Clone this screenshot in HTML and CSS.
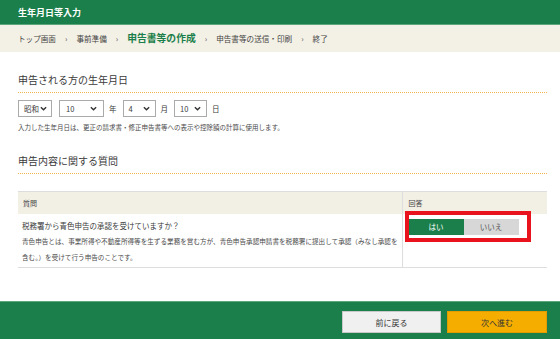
FILE: index.html
```html
<!DOCTYPE html>
<html lang="ja">
<head>
<meta charset="utf-8">
<link rel="stylesheet" href="styles.css">
</head>
<body>
<div class="page">
  <header class="topbar"><h1 class="topbar-title">生年月日等入力</h1></header>
  <nav class="crumbs">
    <span class="crumb">トップ画面</span><span class="sep">›</span>
    <span class="crumb">事前準備</span><span class="sep">›</span>
    <span class="crumb current">申告書等の作成</span><span class="sep">›</span>
    <span class="crumb">申告書等の送信・印刷</span><span class="sep">›</span>
    <span class="crumb">終了</span>
  </nav>
  <main class="content">
    <h2 class="sec-title">申告される方の生年月日</h2>
    <div class="dob">
      <span class="sel sel-era"><span class="sel-val">昭和</span><svg class="chev" viewBox="0 0 8 5"><path d="M1 1l3 3 3-3" fill="none" stroke="#333" stroke-width="1.6"/></svg></span>
      <span class="sel sel-year"><span class="sel-val">10</span><svg class="chev" viewBox="0 0 8 5"><path d="M1 1l3 3 3-3" fill="none" stroke="#333" stroke-width="1.6"/></svg></span>
      <span class="unit">年</span>
      <span class="sel sel-small"><span class="sel-val">4</span><svg class="chev" viewBox="0 0 8 5"><path d="M1 1l3 3 3-3" fill="none" stroke="#333" stroke-width="1.6"/></svg></span>
      <span class="unit">月</span>
      <span class="sel sel-small"><span class="sel-val">10</span><svg class="chev" viewBox="0 0 8 5"><path d="M1 1l3 3 3-3" fill="none" stroke="#333" stroke-width="1.6"/></svg></span>
      <span class="unit">日</span>
    </div>
    <p class="note">入力した生年月日は、更正の請求書・修正申告書等への表示や控除額の計算に使用します。</p>

    <h2 class="sec-title sec-2">申告内容に関する質問</h2>
    <table class="qtable">
      <thead>
        <tr><th class="col-q">質問</th><th class="col-a">回答</th></tr>
      </thead>
      <tbody>
        <tr>
          <td class="col-q">
            <p class="q-main">税務署から青色申告の承認を受けていますか？</p>
            <p class="q-desc">青色申告とは、事業所得や不動産所得等を生ずる業務を営む方が、青色申告承認申請書を税務署に提出して承認（みなし承認を含む。）を受けて行う申告のことです。</p>
          </td>
          <td class="col-a">
            <div class="answer">
              <span class="btn-yes">はい</span><span class="btn-no">いいえ</span>
              <span class="highlight"></span>
            </div>
          </td>
        </tr>
      </tbody>
    </table>
  </main>
  <footer class="footbar">
    <span class="btn-back">前に戻る</span>
    <span class="btn-next">次へ進む</span>
  </footer>
</div>
</body>
</html>
```
FILE: styles.css
```css
* { box-sizing: border-box; }
html, body { margin: 0; padding: 0; }
body {
  font-family: "Noto Sans CJK JP", "Noto Sans", sans-serif;
  color: #3a3a3a;
  background: #fff;
}
.page {
  height: 339px;
  display: flex;
  flex-direction: column;
  overflow: hidden;
}
.topbar {
  height: 25px;
  background: #1b7f4b;
  border-bottom: 1px solid #5ea67c;
  display: flex;
  align-items: center;
  padding-left: 18px;
}
.topbar-title {
  margin: 0;
  font-size: 9px;
  font-weight: bold;
  color: #fff;
  line-height: 1;
}
.crumbs {
  height: 27px;
  background: #f3f0e6;
  display: flex;
  align-items: center;
  padding-left: 18px;
  font-size: 7.6px;
  color: #444;
}
.crumb { line-height: 1; }
.crumb.current {
  font-size: 9.8px;
  font-weight: bold;
  color: #1b7f4b;
}
.sep {
  margin: 0 9px;
  font-size: 8px;
  color: #555;
}
.content {
  margin: 0 13px 0 18px;
}
.sec-title {
  margin: 21px 0 0;
  font-size: 10px;
  font-weight: normal;
  line-height: 14px;
  color: #3a3a3a;
  padding-bottom: 5px;
  border-bottom: 1px dotted #f2b552;
}
.sec-2 { margin-top: 22px; }
.dob {
  margin-top: 7px;
  display: flex;
  align-items: center;
  height: 17px;
  font-size: 7.5px;
  color: #3a3a3a;
}
.sel {
  height: 17px;
  border: 1px solid #aaa;
  background: #fff;
  display: flex;
  align-items: center;
  justify-content: space-between;
  padding: 0 4px 0 5px;
}
.sel-era { width: 34px; margin-right: 7px; }
.sel-year { width: 45px; padding-left: 6px; padding-right: 6px; }
.sel-small { width: 33px; padding-left: 5px; padding-right: 5px; }
.chev { width: 7px; height: 5px; display: block; }
.unit { margin: 0 6px 0 5px; }
.note {
  margin: 5px 0 0;
  font-size: 6.5px;
  line-height: 10px;
  color: #4a4a4a;
}
.qtable {
  margin-top: 17px;
  width: 529px;
  border-collapse: collapse;
  font-size: 7px;
}
.qtable th {
  background: #f2efe4;
  font-weight: normal;
  text-align: left;
  height: 22px;
  padding: 0 5px;
  border-top: 1px solid #ddd;
  color: #444;
}
.qtable td {
  vertical-align: top;
  height: 54px;
  border-bottom: 1px solid #ddd;
  padding: 0;
}
.qtable th.col-a { border-left: 1px solid #ddd; padding-left: 6px; }
.qtable td.col-a { border-left: 1px solid #ddd; }
.col-q { width: 384px; }
td.col-q { padding: 5px 4px 0 4px; }
.q-main {
  margin: 0;
  font-size: 7.5px;
  line-height: 14px;
  color: #3a3a3a;
}
.q-desc {
  margin: 0;
  font-size: 6.6px;
  line-height: 16px;
  color: #4a4a4a;
}
.answer {
  position: relative;
  display: flex;
  margin: 5px 0 0 6px;
}
.btn-yes, .btn-no {
  width: 55px;
  height: 16px;
  display: flex;
  align-items: center;
  justify-content: center;
  font-size: 7.5px;
}
.btn-yes { background: #1b7f4b; color: #fff; }
.btn-no { background: #d7d7d7; color: #555; }
.highlight {
  position: absolute;
  left: -4px;
  top: -8px;
  width: 126px;
  height: 31px;
  border: 4px solid #e8131d;
}
.footbar {
  margin-top: auto;
  height: 38px;
  background: #1b7f4b;
  border-top: 1px solid #5ea67c;
  display: flex;
  justify-content: flex-end;
  align-items: flex-start;
  padding: 9px 13px 0 0;
  gap: 6px;
}
.btn-back, .btn-next {
  width: 99px;
  height: 22px;
  display: flex;
  align-items: center;
  justify-content: center;
  font-size: 8px;
  color: #333;
}
.btn-back { background: #f0f0f0; border: 1px solid #c8c8c8; }
.btn-next { background: #f5ad00; border: 1px solid #e29c00; width: 100px; }
```
